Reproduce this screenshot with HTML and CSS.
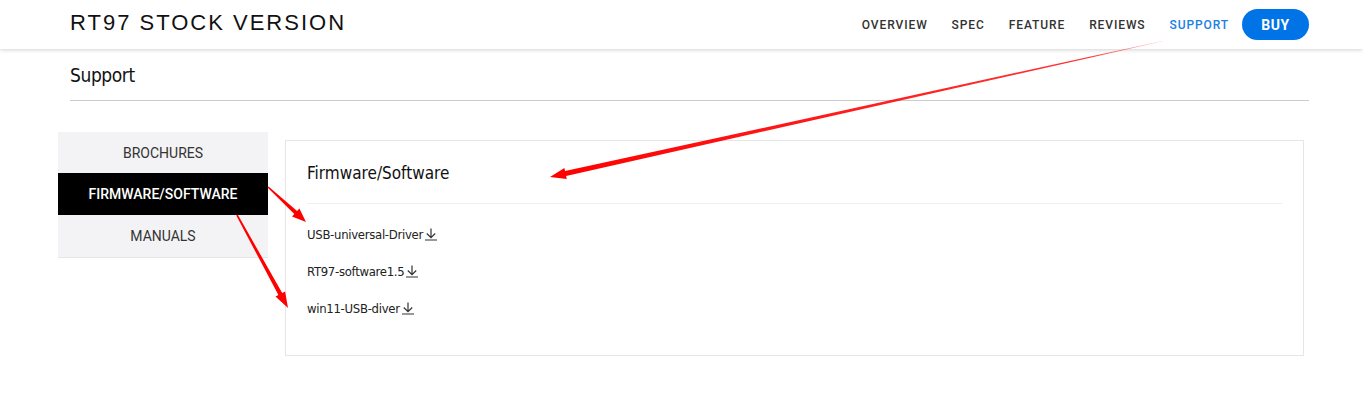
FILE: index.html
```html
<!DOCTYPE html>
<html lang="en">

<head>
  <meta charset="UTF-8">
  <title>RT97 Stock Version - Support</title>
  <link rel="stylesheet" href="styles.css">
</head>

<body>
  <header class="topbar">
    <h1 class="produkt-navn">RT97 STOCK VERSION</h1>
    <nav class="menu">
      <a href="#">OVERVIEW</a>
      <a href="#">SPEC</a>
      <a href="#">FEATURE</a>
      <a href="#">REVIEWS</a>
      <a href="#" class="valgt">SUPPORT</a>
      <a href="#" class="buy">BUY</a>
    </nav>
  </header>

  <h2 class="overskrift">Support</h2>

  <section class="support">
    <div class="faner">
      <button class="fane">BROCHURES</button>
      <button class="fane aktiv">FIRMWARE/SOFTWARE</button>
      <button class="fane">MANUALS</button>
    </div>

    <article class="indhold">
      <h3>Firmware/Software</h3>
      <ul class="filer">
        <li><a href="#">USB-universal-Driver<svg class="pil" width="14" height="14" viewBox="0 0 14 14"><path d="M7 1.5v9M2.8 6.5l4.2 4.2 4.2-4.2M1 13h12" /></svg></a></li>
        <li><a href="#">RT97-software1.5<svg class="pil" width="14" height="14" viewBox="0 0 14 14"><path d="M7 1.5v9M2.8 6.5l4.2 4.2 4.2-4.2M1 13h12" /></svg></a></li>
        <li><a href="#">win11-USB-diver<svg class="pil" width="14" height="14" viewBox="0 0 14 14"><path d="M7 1.5v9M2.8 6.5l4.2 4.2 4.2-4.2M1 13h12" /></svg></a></li>
      </ul>
    </article>
  </section>

  <!-- røde pile oven på skærmbilledet -->
  <svg class="pile" width="1363" height="404" viewBox="0 0 1363 404">
    <defs>
      <linearGradient id="fade" gradientUnits="userSpaceOnUse" x1="1163" y1="41" x2="550" y2="177">
        <stop offset="0" stop-color="#ff0000" stop-opacity="0.1" />
        <stop offset="0.12" stop-color="#ff0000" stop-opacity="0.8" />
        <stop offset="1" stop-color="#ff0000" />
      </linearGradient>
    </defs>
    <polygon fill="url(#fade)" points="1162.9,40.7 565.1,171.1 564.4,168.1 550,177 566.8,178.9 566.1,175.9 1163.1,41.3" />
    <polygon fill="#ff0000" points="268.5,186.4 297.1,211 299.4,208.5 306,222 292,216.5 294.3,214 267.5,187.6" />
    <polygon fill="#ff0000" points="237.7,214.6 282.2,292.9 285.1,291.4 288,308 275.5,296.6 278.4,295.1 236.3,215.4" />
  </svg>
</body>

</html>
```

FILE: styles.css
```css
* {
  box-sizing: border-box;
}

body {
  margin: 0;
  background: #fff;
  color: #222;
  font-family: Roboto, "Liberation Sans", sans-serif;
}

.topbar {
  height: 49px;
  display: flex;
  justify-content: space-between;
  align-items: center;
  padding: 0 54px 0 70px;
  background: #fff;
  box-shadow: 0 1px 4px rgba(0, 0, 0, 0.18);
}

.produkt-navn {
  margin: 0 0 3px;
  font-family: "Liberation Sans", Arial, sans-serif;
  font-weight: normal;
  font-size: 22px;
  letter-spacing: 2px;
  color: #111;
}

.menu {
  display: flex;
  align-items: center;
  gap: 24px;
}

.menu a {
  font-size: 12px;
  font-weight: 500;
  letter-spacing: 0.9px;
  color: #333;
  text-decoration: none;
}

.menu .valgt {
  color: #1a7fe6;
}

.menu .buy {
  margin-left: -11px;
  width: 67px;
  height: 31px;
  border-radius: 16px;
  background: #0073e6;
  color: #fff;
  font-size: 14px;
  font-weight: 700;
  letter-spacing: 0.5px;
  display: flex;
  justify-content: center;
  align-items: center;
}

.overskrift {
  margin: 0 54px 0 70px;
  padding: 14px 0 13px;
  line-height: 24px;
  font-family: "DejaVu Sans Condensed", sans-serif;
  font-weight: normal;
  font-size: 19px;
  letter-spacing: -0.4px;
  color: #111;
  border-bottom: 1px solid #ccc;
}

.support {
  display: flex;
  align-items: flex-start;
  margin-top: 31px;
  padding-left: 58px;
}

.faner {
  width: 210px;
  display: flex;
  flex-direction: column;
  background: #f3f3f5;
  border-bottom: 1px solid #e6e6e8;
}

.fane {
  height: 42px;
  border: 0;
  background: none;
  font-family: Roboto, "Liberation Sans", sans-serif;
  font-size: 14px;
  color: #333;
}

.fane:first-child {
  height: 41px;
}

.fane.aktiv {
  background: #000;
  color: #fff;
  font-weight: 500;
}

.indhold {
  margin: 8px 0 0 17px;
  width: 1019px;
  height: 216px;
  padding: 0 21px;
  border: 1px solid #e6e6e6;
  font-family: "DejaVu Sans Condensed", sans-serif;
}

.indhold h3 {
  margin: 0;
  padding: 20px 0 18px;
  line-height: 24px;
  font-weight: normal;
  font-size: 17px;
  color: #111;
  border-bottom: 1px solid #f0f0f0;
}

.filer {
  list-style: none;
  margin: 20px 0 0;
  padding: 0;
}

.filer li {
  line-height: 20px;
  margin-bottom: 16px;
}

.filer a {
  font-size: 13px;
  letter-spacing: -0.3px;
  color: #222;
  text-decoration: none;
}

.pil {
  margin-left: 1px;
  vertical-align: -2px;
  fill: none;
  stroke: #333;
  stroke-width: 1.2;
}

.pile {
  position: absolute;
  top: 0;
  left: 0;
  pointer-events: none;
}
```
